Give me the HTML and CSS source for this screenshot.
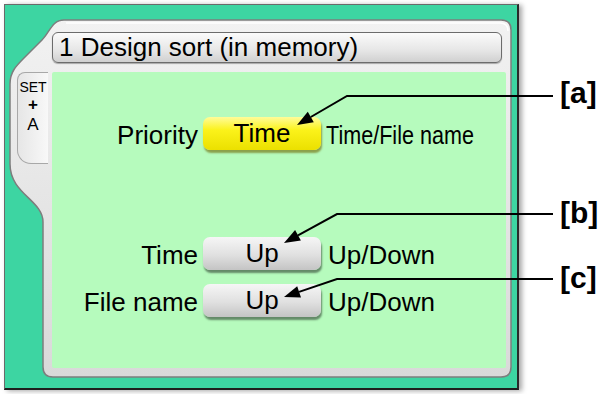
FILE: index.html
```html
<!DOCTYPE html>
<html>
    <head>
        <meta name="viewport" content="width=device-width, initial-scale=1">
        <link rel="stylesheet" href="styles.css">
    </head>
    <body>
        <div class="page">
            <div class="device">
                <!-- bezel of the panel, drawn in page coordinates -->
                <svg class="bezel" width="515" height="386" viewBox="4 4 515 386">
                    <defs>
                        <linearGradient id="bez" x1="0" y1="0" x2="0" y2="1">
                            <stop offset="0" stop-color="#f2f2f2"/>
                            <stop offset="1" stop-color="#d9d9d9"/>
                        </linearGradient>
                    </defs>
                    <path d="M64 20 H501 Q511 20 511 30 V367 Q511 377 501 377 H53 Q43 377 43 367 V222 C43 200 10 194 10 164 V84 C10 72 16 66 24 58 L42 40 C50 32 52 20 64 20 Z"
                          fill="url(#bez)" stroke="#7d7d7d" stroke-width="1.5"/>
                    <path d="M66 23 H500 Q508 23 508 31" fill="none" stroke="#fff" stroke-width="1.5"/>
                </svg>

                <div class="head">1 Design sort (in memory)</div>

                <div class="body">
                    <div class="settab">
                        <span class="set">SET</span>
                        <span class="plus">+</span>
                        <span class="key">A</span>
                    </div>
                    <div class="screen">
                        <div class="row first">
                            <span class="name">Priority</span>
                            <span class="btn yellow">Time</span>
                            <span class="opts"><span class="narrow">Time/File name</span></span>
                        </div>
                        <div class="row second">
                            <span class="name">Time</span>
                            <span class="btn">Up</span>
                            <span class="opts">Up/Down</span>
                        </div>
                        <div class="row">
                            <span class="name">File name</span>
                            <span class="btn">Up</span>
                            <span class="opts">Up/Down</span>
                        </div>
                    </div>
                </div>
            </div>

            <div class="tags">
                <span class="tag tag-a">[a]</span>
                <span class="tag tag-b">[b]</span>
                <span class="tag tag-c">[c]</span>
            </div>

            <!-- leader lines for the callouts -->
            <svg class="callouts" width="600" height="394" viewBox="0 0 600 394">
                <g fill="none" stroke="#000" stroke-width="2">
                    <polyline points="553,96 347,96 310.8,117"/>
                    <polyline points="553,214 337,214 298,235.3"/>
                    <polyline points="553,279 337,279 299.1,291.9"/>
                </g>
                <g fill="#000">
                    <polygon points="297,125 313.8,122.2 307.8,111.8"/>
                    <polygon points="284,243 300.9,240.6 295.1,230"/>
                    <polygon points="284,297 301,297.6 297.2,286.2"/>
                </g>
            </svg>
        </div>
    </body>
</html>
```

FILE: styles.css
```css
html, body { margin: 0; padding: 0; background: #fff; }
body { font-family: "Liberation Sans", Arial, sans-serif; color: #000; }

.page {
    position: relative;
    width: 600px;
    height: 394px;
    display: flex;
    padding: 4px 0 0 4px;
    box-sizing: border-box;
}

.device {
    position: relative;
    width: 515px;
    height: 386px;
    box-sizing: border-box;
    background: #3dd5a2;
    border: 1px solid #6a6a6a;
    border-right: 2px solid #2a2a2a;
    border-bottom: 2px solid #1e1e1e;
    box-shadow: 3px 1px 5px rgba(0, 0, 0, 0.35);
    padding: 27px 0 0 47px;
}

.bezel {
    position: absolute;
    top: -1px;
    left: -1px;
}

.head {
    position: relative;
    width: 450px;
    height: 31px;
    box-sizing: border-box;
    border: 1px solid #6c6c6c;
    border-radius: 6px;
    background: linear-gradient(#fbfbfb, #e6e6e6 60%, #d0d0d0);
    box-shadow: 0 1px 1px rgba(0, 0, 0, 0.3);
    font-size: 26px;
    line-height: 29px;
    padding-left: 6px;
}

.body {
    position: relative;
    display: flex;
    gap: 4px;
    margin: 9px 0 0 -35px;
}

.settab {
    width: 31px;
    height: 92px;
    box-sizing: border-box;
    border: 1px solid #a8a8a8;
    border-right: none;
    border-radius: 8px 0 0 14px;
    background: linear-gradient(90deg, #e6e6e6, #f8f8f8);
    display: flex;
    flex-direction: column;
    align-items: center;
    padding-top: 6px;
    line-height: normal;
}
.set { font-size: 14px; }
.plus { font-size: 17px; font-weight: bold; }
.key { font-size: 17px; }

.screen {
    width: 454px;
    height: 296px;
    box-sizing: border-box;
    background: #b6fbbd;
    border-radius: 2px;
    padding-top: 45px;
}

.row {
    display: grid;
    grid-template-columns: 146px 118px auto;
    column-gap: 5px;
    align-items: center;
    height: 36px;
    font-size: 26px;
}
.row.first { margin-bottom: 84px; }
.row.second { margin-bottom: 11px; }

.name { text-align: right; }
.opts { padding-left: 2px; }

.btn {
    height: 33px;
    line-height: 33px;
    align-self: start;
    text-align: center;
    border-radius: 7px;
    background: linear-gradient(#f6f6f6, #e0e0e0 55%, #c4c4c4);
    box-shadow: 1px 3px 2px rgba(0, 0, 0, 0.45);
}
.btn.yellow {
    background: linear-gradient(#fffc9a, #fbf21a 40%, #ebe000);
    box-shadow: 1px 3px 2px rgba(110, 100, 0, 0.6);
}

.narrow {
    display: inline-block;
    margin-left: -2px;
    transform: scaleX(0.83);
    transform-origin: left center;
    white-space: nowrap;
}

.tags {
    display: flex;
    flex-direction: column;
    margin-left: 41px;
}
.tag {
    font-size: 30px;
    font-weight: bold;
    line-height: 34px;
}
.tag-a { margin-top: 72px; }
.tag-b { margin-top: 86px; }
.tag-c { margin-top: 31px; }

.callouts {
    position: absolute;
    top: 0;
    left: 0;
    pointer-events: none;
}
```
